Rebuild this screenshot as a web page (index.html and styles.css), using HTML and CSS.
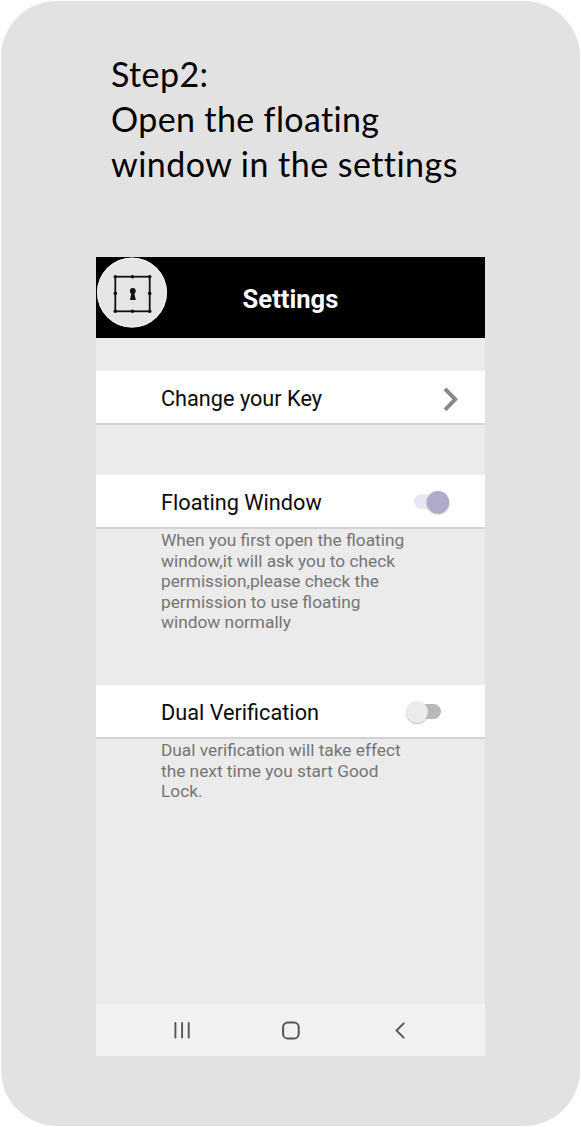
FILE: index.html
```html
<!DOCTYPE html>
<html lang="en">
<head>
<meta charset="utf-8">
<title>Settings</title>
<link rel="stylesheet" href="styles.css">
</head>
<body>
<main class="card">
  <h1 class="step">
    <span class="step-line step-a">Step2:</span>
    <span class="step-line step-b">Open the floating</span>
    <span class="step-line step-c">window in the settings</span>
  </h1>
  <section class="phone">
    <header class="bar">
      <svg class="logo" width="72" height="72" viewBox="0 0 72 72">
        <circle cx="36" cy="35.6" r="35" fill="#e5e5e3"/>
        <circle cx="36" cy="35.6" r="34.3" fill="none" stroke="#efefed" stroke-width="1.2"/>
        <rect x="19.3" y="19.7" width="34.4" height="34.6" fill="none" stroke="#111" stroke-width="1.8"/>
        <g fill="#111">
          <circle cx="19.3" cy="19.7" r="1.8"/><circle cx="36.5" cy="19.7" r="1.8"/><circle cx="53.7" cy="19.7" r="1.8"/>
          <circle cx="19.3" cy="36.4" r="1.8"/><circle cx="53.7" cy="36.4" r="1.8"/>
          <circle cx="19.3" cy="54.3" r="1.8"/><circle cx="36.5" cy="54.3" r="1.8"/><circle cx="53.7" cy="54.3" r="1.8"/>
          <circle cx="36.8" cy="33.9" r="2.9"/>
          <path d="M35.6 35h2.4l1.8 8h-5.8z"/>
        </g>
      </svg>
      <h2 class="title">Settings</h2>
    </header>
    <div class="row row-key">
      <span class="label">Change your Key</span>
      <svg class="chevron" width="18" height="26" viewBox="0 0 18 26"><path d="M3 2.8 13.2 13.3 3 23.8" fill="none" stroke="#888" stroke-width="4"/></svg>
    </div>
    <div class="row row-float">
      <span class="label">Floating Window</span>
      <span class="switch on"><span class="knob"></span></span>
    </div>
    <p class="note note-float">
      When you first open the floating<br>
      window,it will ask you to check<br>
      permission,please check the<br>
      permission to use floating<br>
      window normally
    </p>
    <div class="row">
      <span class="label">Dual Verification</span>
      <span class="switch off"><span class="knob"></span></span>
    </div>
    <p class="note">
      Dual verification will take effect<br>
      the next time you start Good<br>
      Lock.
    </p>
    <nav class="nav">
      <svg width="389" height="52" viewBox="0 0 389 52" fill="none" stroke="#555" stroke-width="1.9" stroke-linecap="round">
        <path d="M79.4 19v14.5M86.1 19v14.5M92.7 19v14.5"/>
        <rect x="187.1" y="18.5" width="15.6" height="16" rx="4.6" stroke-width="2"/>
        <path d="M307.7 19.3 300.5 26.5 307.7 33.7"/>
      </svg>
    </nav>
  </section>
</main>
</body>
</html>
```

FILE: styles.css
```css
* { box-sizing: border-box; }
body { margin: 0; background: #fff; font-family: Roboto, "Liberation Sans", sans-serif; }
.card {
  width: 579px; height: 1125px; margin: 1px;
  padding: 50px 0 0 95px;
  border-radius: 56px;
  background: #e2e2e2;
}
.step {
  height: 206px; margin: 0; padding-left: 15px;
  font: 400 34px/45px Lato, "Open Sans", sans-serif;
  color: #000;
}
.step-line { display: block; white-space: nowrap; }
.step-a { letter-spacing: .4px; }
.step-b { letter-spacing: .36px; }
.step-c { letter-spacing: .46px; }
.phone {
  display: flex; flex-direction: column;
  width: 389px; height: 799px;
  background: #ebebeb;
}
.bar {
  position: relative;
  display: flex; align-items: center; justify-content: center;
  height: 81px; flex: none;
  background: #000;
}
.logo { position: absolute; left: 0; top: 0; }
.title { margin: 2px 0 0; font-size: 25.6px; line-height: 30px; font-weight: 700; color: #fff; }
.row {
  display: flex; align-items: center; justify-content: space-between;
  height: 54px; flex: none;
  padding-left: 65px;
  background: #fff;
  border-bottom: 2px solid #d3d3d3;
}
.row-key { margin-top: 33px; }
.row-float { margin-top: 50px; }
.label { font-size: 21.7px; line-height: 28px; color: #0a0a0a; white-space: nowrap; padding-top: 3px; }
.chevron { margin-right: 25px; margin-top: 4px; }
.switch { display: flex; align-items: center; width: 35px; height: 24px; position: relative; margin-top: 2px; }
.switch::before { content: ""; position: absolute; top: 4px; width: 27px; height: 15px; border-radius: 8px; }
.knob { position: relative; width: 22px; height: 22px; border-radius: 50%; box-shadow: 0 1px 2px rgba(0, 0, 0, .4); }
.on { justify-content: flex-end; margin-right: 36px; }
.on::before { left: 0; background: #e8e6f1; }
.on .knob { background: #aeaacb; }
.off { margin-right: 44px; }
.off::before { right: 0; background: #b9b9b9; }
.off .knob { background: #ececec; box-shadow: 0 1px 1px rgba(0, 0, 0, .25); }
.note { margin: 0; padding: 1px 0 0 65px; font-size: 17.3px; line-height: 20.5px; color: #757575; white-space: nowrap; }
.note-float { height: 156px; }
.nav { margin-top: auto; height: 52px; background: #f1f1f1; }
.nav svg { display: block; }
```
